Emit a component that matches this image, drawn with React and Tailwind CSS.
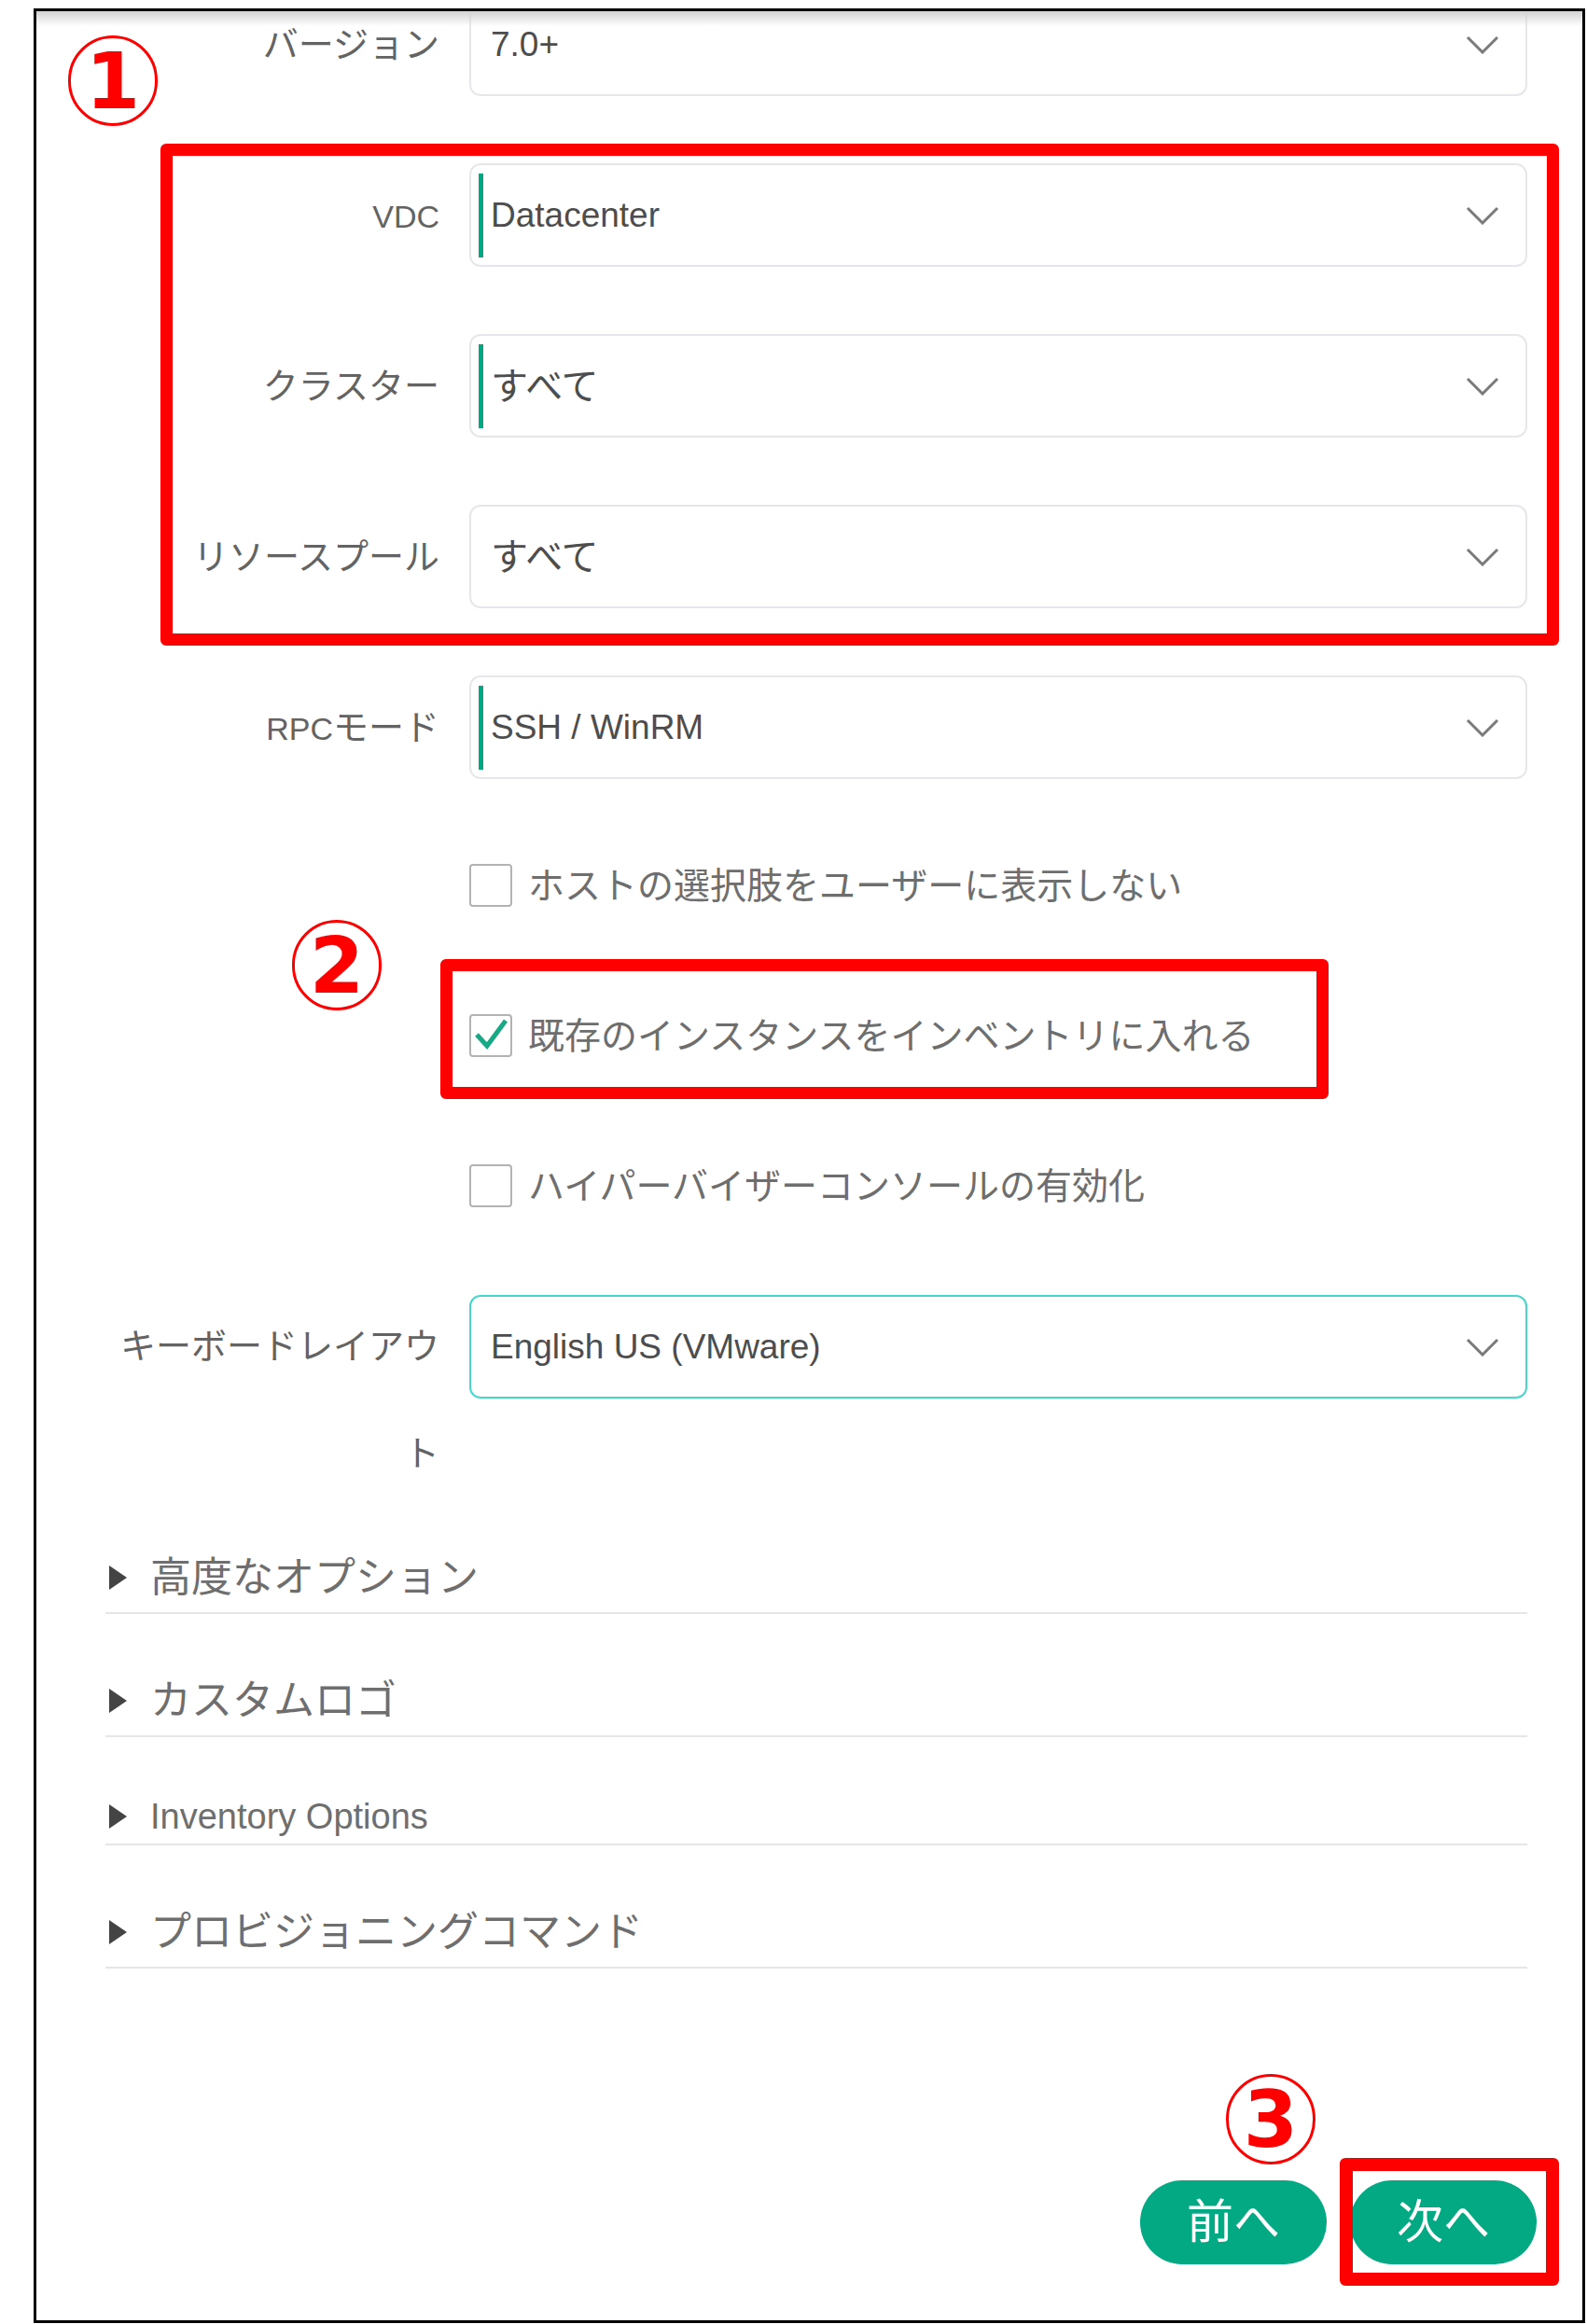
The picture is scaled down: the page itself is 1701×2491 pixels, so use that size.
import React from "react";

const FONT = "font-['Liberation_Sans','Noto_Sans_CJK_JP',sans-serif]";

function Chevron() {
  return (
    <svg width="36" height="20" viewBox="0 0 36 20" fill="none" className="shrink-0">
      <polyline points="2,2 18,18 34,2" stroke="#7a7a7a" strokeWidth="3" />
    </svg>
  );
}

function Select({ value, bar, focus, cjk }) {
  return (
    <div
      className={
        "h-[111px] rounded-[12px] border-2 bg-white flex items-center pl-[8px] pr-[28px] " +
        (focus ? "border-[#45d6cc]" : "border-[#e6e7eb]")
      }
    >
      <div className={"w-[5px] h-[90px] shrink-0 " + (bar ? "bg-[#01a982]" : "bg-transparent")} />
      <span className={"ml-[8px] flex-1 text-[#4d4d4d] leading-none " + (cjk ? "text-[40px]" : "text-[37px]")}>
        {value}
      </span>
      <Chevron />
    </div>
  );
}

function Row({ label, value, bar, cjk, className }) {
  return (
    <div className={"grid grid-cols-[358px_1fr] gap-x-[32px] items-center " + className}>
      <div className="text-right text-[38px] text-[#636363] leading-none">{label}</div>
      <Select value={value} bar={bar} cjk={cjk} />
    </div>
  );
}

function Checkbox({ checked, label, className }) {
  return (
    <div className={"ml-[390px] flex items-center gap-[17px] h-[46px] " + className}>
      <div className="w-[46px] h-[46px] rounded-[4px] border-2 border-[#b3b3b3] bg-white flex items-center justify-center shrink-0">
        {checked && (
          <svg width="42" height="42" viewBox="0 0 42 42" fill="none">
            <polyline points="6,20 17,32 37,5" stroke="#17a886" strokeWidth="5" />
          </svg>
        )}
      </div>
      <span className="text-[39px] text-[#6e6e6e] leading-none">{label}</span>
    </div>
  );
}

function Section({ title, en, className }) {
  return (
    <div className={"border-b-2 border-[#e6e6e6] " + className}>
      <div className={"flex items-center " + (en ? "h-[58px]" : "h-[74px]")}>
        <svg width="19" height="26" viewBox="0 0 19 26" className="ml-[4px] shrink-0">
          <polygon points="0,0 19,13 0,26" fill="#444" />
        </svg>
        <span className={"ml-[25px] text-[#6e6e6e] leading-none " + (en ? "text-[38px]" : "text-[44px]")}>
          {title}
        </span>
      </div>
    </div>
  );
}

function Circle({ n, className }) {
  return (
    <div
      className={
        "absolute w-[96px] h-[97px] rounded-full border-[3px] border-[#ff0000] flex items-center justify-center " +
        className
      }
    >
      <span className="font-['DejaVu_Sans',sans-serif] font-bold text-[84px] leading-none text-[#ff0000]">{n}</span>
    </div>
  );
}

export default function App() {
  return (
    <div className={"min-h-screen bg-white pl-[36px] pt-[9px] " + FONT}>
      <div className="relative w-[1663px] h-[2481px] border-[3px] border-black overflow-hidden bg-white">
        <div className="pl-[74px] pr-[59px]">
          <Row className="-mt-[20px]" label="バージョン" value="7.0+" />
          <Row className="mt-[72px]" label={<span className="text-[34px]">VDC</span>} value="Datacenter" bar />
          <Row className="mt-[72px]" label="クラスター" value="すべて" bar cjk />
          <Row className="mt-[72px]" label="リソースプール" value="すべて" cjk />
          <Row
            className="mt-[72px]"
            label={
              <>
                <span className="text-[34px]">RPC</span>モード
              </>
            }
            value="SSH / WinRM"
            bar
          />

          <Checkbox className="mt-[91px]" label="ホストの選択肢をユーザーに表示しない" />
          <Checkbox className="mt-[115px]" checked label="既存のインスタンスをインベントリに入れる" />
          <Checkbox className="mt-[115px]" label="ハイパーバイザーコンソールの有効化" />

          <div className="mt-[92px] grid grid-cols-[358px_1fr] gap-x-[32px] items-start">
            <div className="text-right text-[38px] text-[#636363] leading-[115px]">キーボードレイアウト</div>
            <div className="mt-[2px]">
              <div className="h-[111px] rounded-[12px] border-2 border-[#45d6cc] bg-white flex items-center pl-[8px] pr-[28px]">
                <div className="w-[5px] h-[90px] shrink-0" />
                <span className="ml-[8px] flex-1 text-[#4d4d4d] text-[37px] leading-none">English US (VMware)</span>
                <Chevron />
              </div>
            </div>
          </div>

          <Section className="mt-[38px]" title="高度なオプション" />
          <Section className="mt-[56px]" title="カスタムロゴ" />
          <Section className="mt-[56px]" title="Inventory Options" en />
          <Section className="mt-[56px]" title="プロビジョニングコマンド" />

          <div className="mt-[227px] flex justify-end gap-[25px] -mr-[10px]">
            <button className="w-[200px] h-[90px] rounded-full bg-[#03a983] text-white text-[50px] leading-none flex items-center justify-center">
              前へ
            </button>
            <button className="w-[200px] h-[90px] rounded-full bg-[#03a983] text-white text-[50px] leading-none flex items-center justify-center">
              次へ
            </button>
          </div>
        </div>

        {/* top scroll shadow */}
        <div className="absolute left-0 right-0 top-0 h-[16px] bg-linear-to-b from-[#d2d2d2] to-transparent pointer-events-none" />

        {/* annotations */}
        <div className="absolute left-[133px] top-[142px] w-[1499px] h-[538px] border-[13px] border-[#ff0000] rounded-[6px] pointer-events-none" />
        <div className="absolute left-[433px] top-[1016px] w-[952px] h-[150px] border-[13px] border-[#ff0000] rounded-[6px] pointer-events-none" />
        <div className="absolute left-[1397px] top-[2301px] w-[235px] h-[137px] border-[14px] border-[#ff0000] rounded-[6px] pointer-events-none" />

        <Circle n="1" className="left-[34px] top-[26px]" />
        <Circle n="2" className="left-[274px] top-[974px]" />
        <Circle n="3" className="left-[1275px] top-[2211px]" />
      </div>
    </div>
  );
}
